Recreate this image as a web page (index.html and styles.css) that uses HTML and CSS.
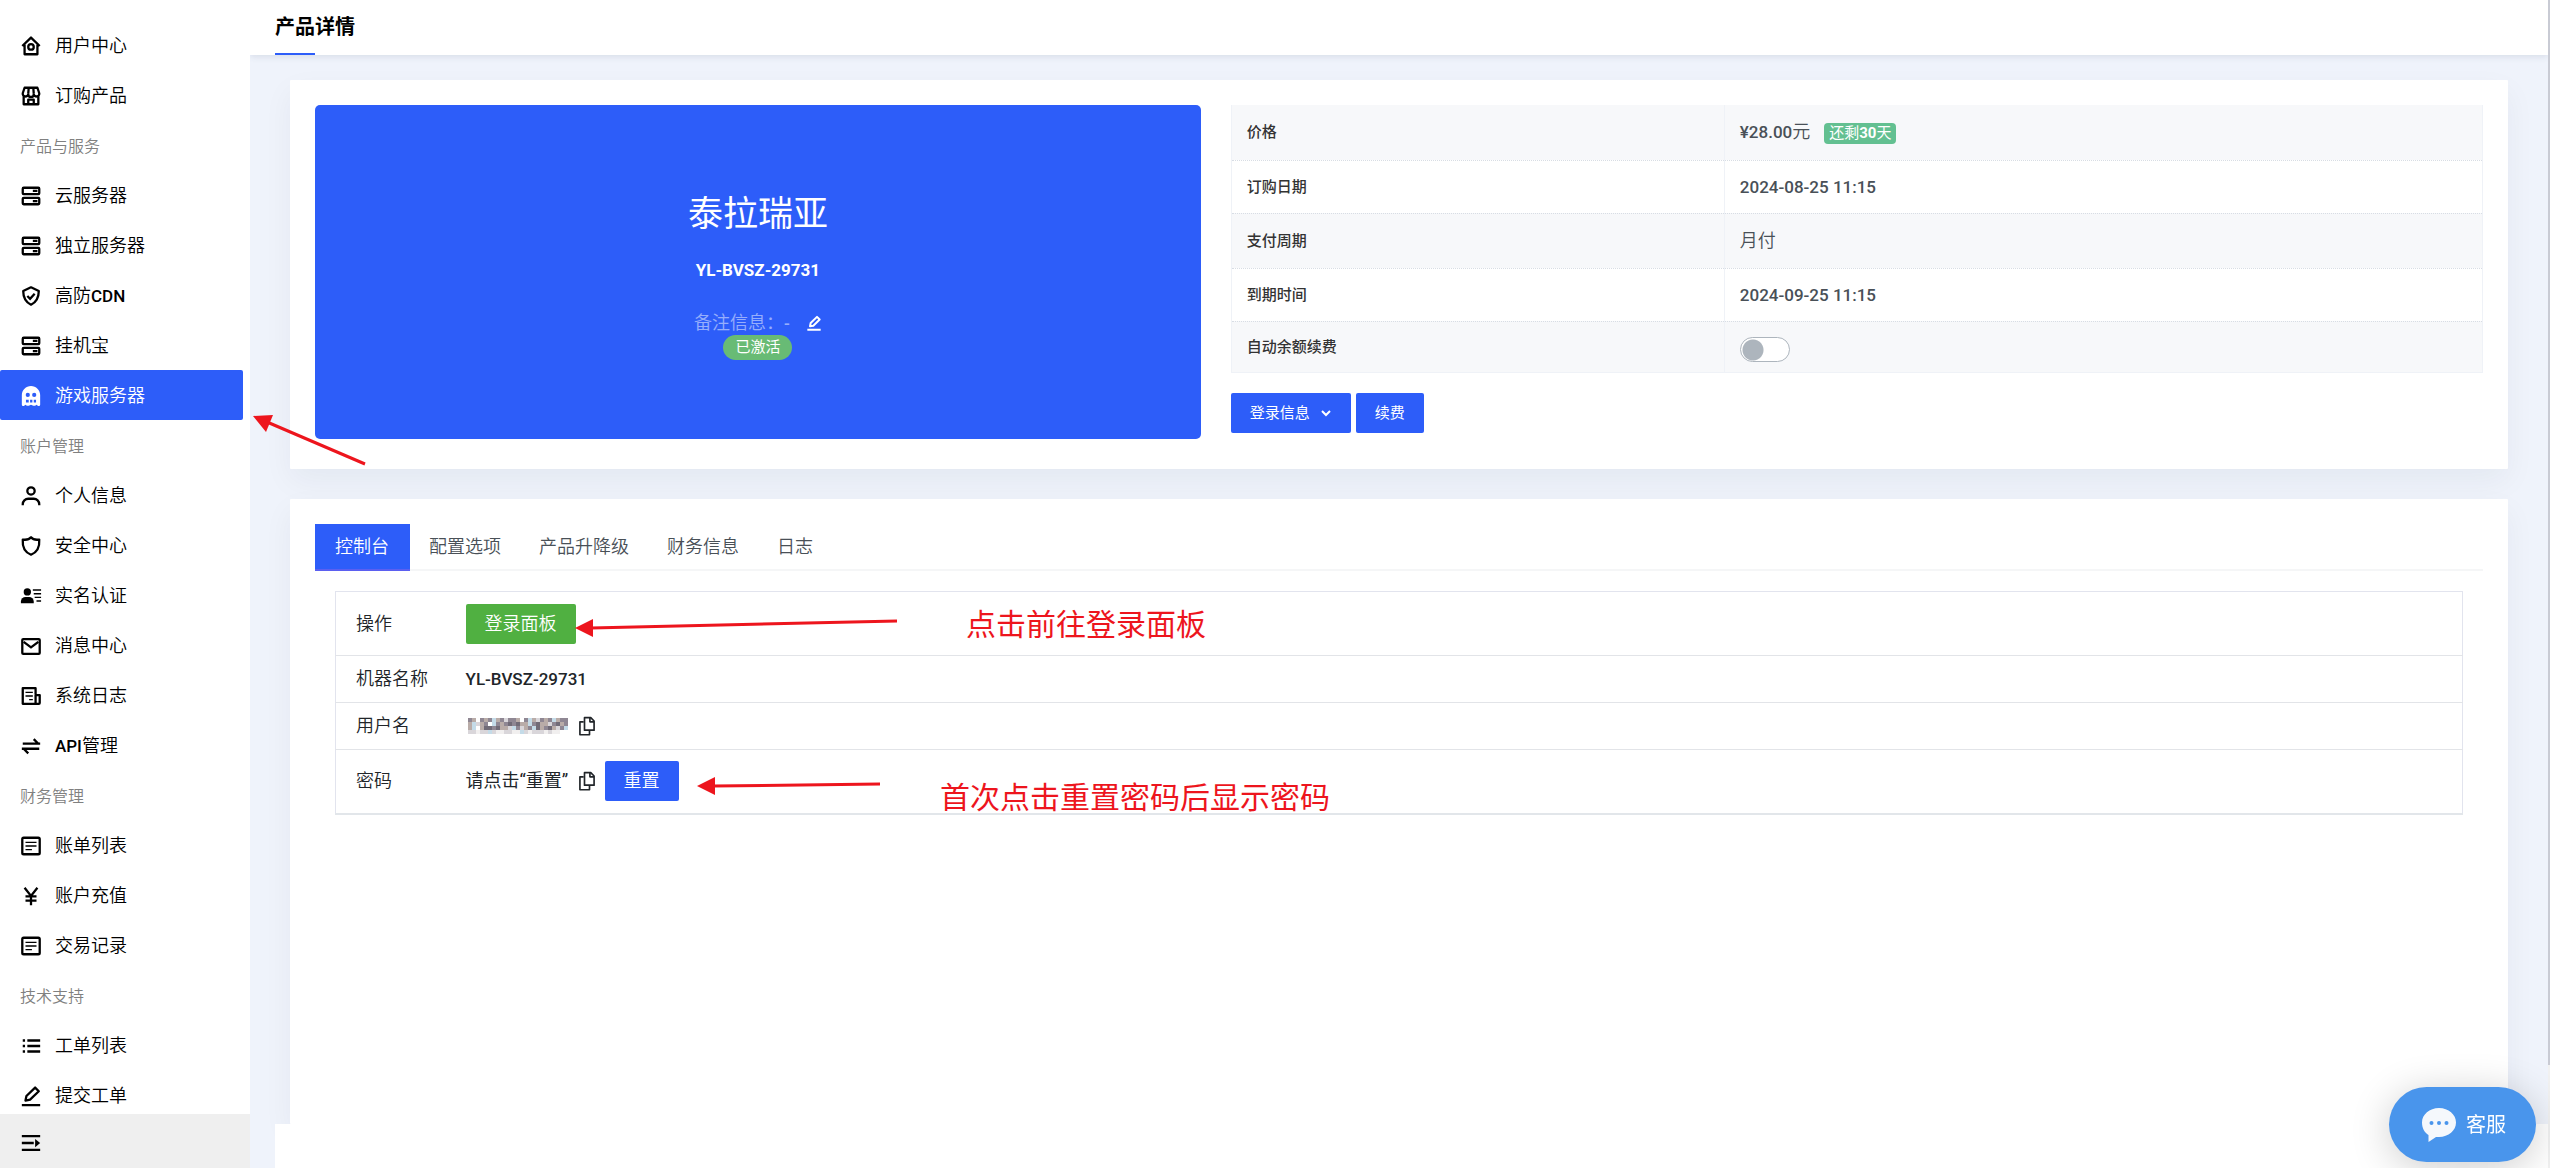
FILE: index.html
```html
<!DOCTYPE html>
<html lang="zh-CN">
<head>
<meta charset="utf-8">
<title>产品详情</title>
<link rel="stylesheet" href="styles.css">
</head>
<body>
<svg class="sprite" aria-hidden="true">
  <defs>
    <g id="i-home"><path d="M2.5 12 12 2.8 21.5 12M5 10.5V21h14V10.5" stroke-linejoin="round"/><circle cx="12" cy="13" r="3"/></g>
    <g id="i-store"><path d="M4 11v10h16V11M9 21v-5h6v5M5 3h14l2 6a3 3 0 0 1-6 1 3 3 0 0 1-6 0 3 3 0 0 1-6-1zM9.500 3 9 9.500M14.500 3l.5 6.500" stroke-linejoin="round"/></g>
    <g id="i-server"><rect x="3" y="3" width="18" height="7" rx="1"/><rect x="3" y="14" width="18" height="7" rx="1"/><path d="M14 6.500h5M14 17.500h5"/></g>
    <g id="i-shield-check"><path d="M12 2.500 3.500 6.500c0 7 2.500 12 8.500 15 6-3 8.500-8 8.500-15z" stroke-linejoin="round"/><path d="m8 12 3 3 5-5.500"/></g>
    <g id="i-ghost"><path fill="currentColor" stroke="none" fill-rule="evenodd" d="M12 1C6.500 1 2 5.500 2 11v10.500a1.500 1.500 0 0 0 2.600 1L6 21.500l1.500 1.200h2L12 21.500l2.500 1.200h2l1.500-1.200 1.400 1a1.500 1.500 0 0 0 2.600-1V11c0-5.500-4.500-10-10-10zM8.500 8.500a2.300 2.300 0 1 1 0 4.600 2.300 2.300 0 0 1 0-4.600zm7 0a2.300 2.300 0 1 1 0 4.600 2.300 2.300 0 0 1 0-4.600zM6.500 16h3v3h-3zm4.500 0h2.500v3H11zm4 0h2.500v3H15z"/></g>
    <g id="i-user"><circle cx="12" cy="6.500" r="4"/><path d="M3 22v-1a6 6 0 0 1 6-6h6a6 6 0 0 1 6 6v1"/></g>
    <g id="i-shield"><path d="M12 2.500C10 5 6.500 5.500 3 5c-.5 7 1.500 13.500 9 16.500C19.500 18.500 21.500 12 21 5c-3.500.5-7 0-9-2.500z" stroke-linejoin="round"/></g>
    <g id="i-idcard"><g fill="currentColor" stroke="none"><circle cx="8" cy="7.500" r="4"/><path d="M1 20v-2a5 5 0 0 1 5-5h4a5 5 0 0 1 5 5v2z"/></g><path stroke-width="1.500" d="M14 5.500h9M15 9.500h8M16 13.500h7M18 17.500h5"/></g>
    <g id="i-mail"><rect x="2.500" y="4.500" width="19" height="16" rx="1"/><path d="m4 7.500 8 6 8-6"/></g>
    <g id="i-log"><path d="M17 10V3.500H3v17h17.500a1 1 0 0 0 1-1V11H17v9.500" stroke-linejoin="round"/><path stroke-width="1.500" d="M6 8h8M6 12h8M10 16h4"/></g>
    <g id="i-swap"><path d="M3 9.500h19M15 4.500l5 5M21 15H2M9 20l-5-5"/></g>
    <g id="i-list"><rect x="2.500" y="3" width="19" height="18" rx="1.500"/><path stroke-width="1.500" d="M6 8h12M6 12h12M6 16h7"/></g>
    <g id="i-yen"><path d="m5 3 7 9 7-9M12 11v11M6 12.500h12M6 17h12"/></g>
    <g id="i-menu"><path d="M3 6h2.500M8 6h14M3 12h2.500M8 12h14M3 18h2.500M8 18h14"/></g>
    <g id="i-pen"><path d="m6 17 1-5L16.500 2.800l4 4L11 16zM2 22h20" stroke-linejoin="round"/></g>
    <g id="i-expand"><path d="M2 4.500h20M2 12h13M2 19.500h20"/><path d="m16.500 7.500 5.500 4.500-5.500 4.500z" fill="currentColor" stroke="none"/></g>
    <g id="i-copy"><path d="M9 2h7.500l4 4v11H9z" stroke-linejoin="round"/><path d="M15.500 2v5h5M8 7H3.500v15.500H15V18" stroke-linejoin="round"/></g>
  </defs>
</svg>

<div class="app">
  <aside class="sidebar">
    <nav class="menu">
      <a class="item" href="#"><svg class="icon" viewBox="0 0 24 24"><use href="#i-home"/></svg>用户中心</a>
      <a class="item" href="#"><svg class="icon" viewBox="0 0 24 24"><use href="#i-store"/></svg>订购产品</a>
      <div class="group">产品与服务</div>
      <a class="item" href="#"><svg class="icon" viewBox="0 0 24 24"><use href="#i-server"/></svg>云服务器</a>
      <a class="item" href="#"><svg class="icon" viewBox="0 0 24 24"><use href="#i-server"/></svg>独立服务器</a>
      <a class="item" href="#"><svg class="icon" viewBox="0 0 24 24"><use href="#i-shield-check"/></svg><span>高防<span class="latin">CDN</span></span></a>
      <a class="item" href="#"><svg class="icon" viewBox="0 0 24 24"><use href="#i-server"/></svg>挂机宝</a>
      <a class="item active" href="#"><svg class="icon" viewBox="0 0 24 24"><use href="#i-ghost"/></svg>游戏服务器</a>
      <div class="group">账户管理</div>
      <a class="item" href="#"><svg class="icon" viewBox="0 0 24 24"><use href="#i-user"/></svg>个人信息</a>
      <a class="item" href="#"><svg class="icon" viewBox="0 0 24 24"><use href="#i-shield"/></svg>安全中心</a>
      <a class="item" href="#"><svg class="icon" viewBox="0 0 24 24"><use href="#i-idcard"/></svg>实名认证</a>
      <a class="item" href="#"><svg class="icon" viewBox="0 0 24 24"><use href="#i-mail"/></svg>消息中心</a>
      <a class="item" href="#"><svg class="icon" viewBox="0 0 24 24"><use href="#i-log"/></svg>系统日志</a>
      <a class="item" href="#"><svg class="icon" viewBox="0 0 24 24"><use href="#i-swap"/></svg><span><span class="latin">API</span>管理</span></a>
      <div class="group">财务管理</div>
      <a class="item" href="#"><svg class="icon" viewBox="0 0 24 24"><use href="#i-list"/></svg>账单列表</a>
      <a class="item" href="#"><svg class="icon" viewBox="0 0 24 24"><use href="#i-yen"/></svg>账户充值</a>
      <a class="item" href="#"><svg class="icon" viewBox="0 0 24 24"><use href="#i-list"/></svg>交易记录</a>
      <div class="group">技术支持</div>
      <a class="item" href="#"><svg class="icon" viewBox="0 0 24 24"><use href="#i-menu"/></svg>工单列表</a>
      <a class="item" href="#"><svg class="icon" viewBox="0 0 24 24"><use href="#i-pen"/></svg>提交工单</a>
    </nav>
    <button class="collapse" type="button" aria-label="展开菜单"><svg class="icon" viewBox="0 0 24 24"><use href="#i-expand"/></svg></button>
  </aside>

  <div class="main">
    <header class="topbar"><h1>产品详情</h1></header>

    <main class="content">
      <section class="card summary">
        <div class="banner-col">
          <div class="banner">
            <h2>泰拉瑞亚</h2>
            <p class="code">YL-BVSZ-29731</p>
            <p class="remark"><span class="dim">备注信息：</span><span class="dim latin">-</span><button class="edit" type="button" aria-label="编辑备注"><svg class="icon" viewBox="0 0 24 24"><use href="#i-pen"/></svg></button></p>
            <span class="status">已激活</span>
          </div>
        </div>
        <div class="facts-col">
          <table class="facts">
            <tr><th scope="row">价格</th><td><span class="latin">¥28.00</span>元<span class="left-days">还剩<b>30</b>天</span></td></tr>
            <tr><th scope="row">订购日期</th><td class="latin">2024-08-25 11:15</td></tr>
            <tr><th scope="row">支付周期</th><td>月付</td></tr>
            <tr><th scope="row">到期时间</th><td class="latin">2024-09-25 11:15</td></tr>
            <tr><th scope="row"><label for="auto-renew">自动余额续费</label></th><td><input class="switch" id="auto-renew" type="checkbox"></td></tr>
          </table>
          <div class="actions">
            <button class="btn btn-small" type="button">登录信息<svg class="chevron" viewBox="0 0 12 12"><path d="m2 4 4 4 4-4"/></svg></button>
            <button class="btn btn-small" type="button">续费</button>
          </div>
        </div>
      </section>

      <section class="card detail">
        <nav class="tabs">
          <a class="tab active" href="#">控制台</a>
          <a class="tab" href="#">配置选项</a>
          <a class="tab" href="#">产品升降级</a>
          <a class="tab" href="#">财务信息</a>
          <a class="tab" href="#">日志</a>
        </nav>
        <div class="panel">
          <table class="info">
            <tr class="tall"><th scope="row">操作</th><td><button class="btn btn-green" type="button">登录面板</button></td></tr>
            <tr><th scope="row">机器名称</th><td class="latin">YL-BVSZ-29731</td></tr>
            <tr><th scope="row">用户名</th><td><div class="line"><span class="masked"><svg viewBox="0 0 100 16" role="img" aria-label="已打码">
              <path stroke="#8f8793" d="M0 2h4M12 2h4M20 2h4M32 2h4M40 2h8M56 2h4M72 2h4M80 2h4M92 2h8M16 6h4M28 6h4M36 6h4M44 6h4M64 6h4M84 6h4M96 6h4M24 10h4M48 10h4M60 10h4M76 10h4M92 10h4"/>
              <path stroke="#b9aca8" d="M4 2h4M16 2h4M28 2h4M48 2h4M64 2h4M76 2h4M88 2h4M0 6h4M12 6h4M32 6h4M52 6h8M72 6h8M92 6h4M0 10h4M12 10h4M32 10h8M56 10h4M72 10h4M84 10h4"/>
              <path stroke="#c4dbe8" d="M4 6h4M24 6h4M60 6h4M4 10h4M44 10h4M64 10h4M24 2h4M60 2h4M84 2h4M96 10h4M20 14h4M52 14h4"/>
              <path stroke="#716b77" d="M20 10h4M28 10h4M40 6h4M48 6h4M68 6h4M68 10h4M80 10h4M88 6h4M16 10h4"/>
              <path stroke="#d9d6da" d="M0 14h8M12 14h8M24 14h4M36 14h8M56 14h4M64 14h12M80 14h4M8 6h4M36 2h4M52 10h4M68 2h4M40 10h4M80 6h4M88 10h4"/>
              <path stroke="#f1efef" d="M8 14h4M28 14h8M44 14h8M60 14h4M76 14h4M84 14h8"/>
            </svg></span><svg class="icon copy" viewBox="0 0 24 24"><use href="#i-copy"/></svg></div></td></tr>
            <tr class="tall"><th scope="row">密码</th><td><div class="line"><span class="secret">请点击“重置”</span><svg class="icon copy" viewBox="0 0 24 24"><use href="#i-copy"/></svg><button class="btn" type="button">重置</button></div></td></tr>
          </table>
        </div>
      </section>
    </main>
    <footer class="footer"></footer>
  </div>
  <div class="scroll"><div class="thumb"></div></div>
</div>

<svg class="mark mark-menu" viewBox="0 0 116 54"><path d="M14 7 112 49"/><path class="head" d="M0 1l20-1-7 17z"/></svg>
<svg class="mark mark-login" viewBox="0 0 324 20"><path d="M16 10 322 3"/><path class="head" d="M0 10 18 1v18z"/></svg>
<svg class="mark mark-reset" viewBox="0 0 186 20"><path d="M16 10 183 8"/><path class="head" d="M0 10 18 1v18z"/></svg>
<p class="note note-login">点击前往登录面板</p>
<p class="note note-reset">首次点击重置密码后显示密码</p>

<button class="chat" type="button"><svg viewBox="0 0 34 34"><path d="M17 0c9.500 0 17 6.500 17 14.500S26.500 29 17 29h-3l-7.500 5v-7C2.500 24.500 0 20 0 14.500 0 6.500 7.500 0 17 0z"/><g class="dots"><circle cx="9.500" cy="15" r="2"/><circle cx="17" cy="15" r="2"/><circle cx="24.500" cy="15" r="2"/></g></svg>客服</button>
</body>
</html>
```
FILE: styles.css
```css
:root {
  --blue: #2d5df9;
  --page: #eff3fb;
  --red: #ed151d;
}

* { box-sizing: border-box; }

body {
  position: relative;
  margin: 0;
  background: var(--page);
  color: #212529;
  font: 350 18px/24px Roboto, "Noto Sans CJK SC", sans-serif;
}

h1, h2, p { margin: 0; }
a { color: inherit; text-decoration: none; }
button { border: 0; padding: 0; background: none; color: inherit; font: inherit; cursor: pointer; }
table { width: 100%; border-collapse: collapse; }
th { text-align: left; font-weight: inherit; }

.sprite { position: absolute; width: 0; height: 0; }

.icon {
  flex: none;
  width: 22px;
  height: 22px;
  fill: none;
  stroke: currentColor;
  stroke-width: 2;
}

.latin { font-size: 17px; font-weight: 500; }

.app {
  display: grid;
  grid-template-columns: 250px minmax(0, 1fr) 2px;
  min-height: 100vh;
}

/* sidebar */
.sidebar {
  position: sticky;
  top: 0;
  display: flex;
  flex-direction: column;
  height: 100vh;
  background: #fff;
  color: #000;
}

.sidebar .icon { stroke-width: 2.5; }

.menu {
  flex: 1;
  min-height: 0;
  padding: 20px 7px 0 0;
  overflow: hidden;
}

.item, .group {
  display: flex;
  align-items: center;
  gap: 13px;
  height: 50px;
  padding: 2px 0 0 20px;
}

.item.active { border-radius: 2px; background: var(--blue); color: #fff; }
.group { padding-top: 3px; color: #808080; font-size: 16px; }

.collapse {
  display: flex;
  align-items: center;
  height: 54px;
  padding: 4px 20px 0;
  background: #efefef;
}

/* page frame */
.main { display: flex; flex-direction: column; }

.topbar {
  height: 55px;
  padding-left: 25px;
  background: #fff;
  box-shadow: 0 2px 6px rgba(60, 70, 110, .12);
}

.topbar h1 {
  position: relative;
  height: 55px;
  color: #000;
  font-size: 20px;
  font-weight: 700;
  line-height: 54px;
}

.topbar h1::after {
  content: "";
  position: absolute;
  left: 0;
  bottom: 0;
  width: 40px;
  height: 2px;
  background: var(--blue);
}

.content {
  flex: 1;
  display: flex;
  flex-direction: column;
  gap: 30px;
  padding: 25px 40px 0;
}

.card { background: #fff; box-shadow: 0 12px 30px rgba(18, 38, 63, .05); border-radius: 1px; }
.footer { position: relative; height: 44px; margin-left: 25px; background: #fff; }

/* summary card */
.summary { display: flex; padding: 25px 10px 30px; }
.banner-col { width: calc(100% * 5 / 12); padding: 0 15px; }
.facts-col { flex: 1; padding: 0 15px; }

.banner {
  display: flex;
  flex-direction: column;
  align-items: center;
  min-height: 334px;
  padding-top: 84px;
  border-radius: 5px;
  background: var(--blue);
  color: #fff;
}

.banner h2 { font-size: 35px; font-weight: 400; line-height: 52px; }
.code { margin-top: 17px; font-size: 17px; font-weight: 700; }
.remark { display: flex; align-items: center; margin-top: 29px; }
.dim { opacity: .5; }
.edit { display: flex; margin-left: 16px; }
.edit .icon { width: 16px; height: 16px; stroke-width: 3; }

.status {
  height: 25px;
  padding: 0 12px;
  border-radius: 13px;
  background: #68bb75;
  font-size: 15px;
  font-weight: 400;
  line-height: 25px;
}

.facts { border: 1px solid #eff2f7; border-top: 0; }
.facts tr { height: 53px; border-bottom: 1px dotted #d8dde4; }
.facts tr:nth-child(odd) { background: #f7f8fa; }
.facts tr:nth-child(1), .facts tr:nth-child(3) { height: 55px; }
.facts tr:last-child { height: 51px; }
.facts th, .facts td { padding: 0 15px; }
.facts th { width: 493px; border-right: 1px solid #eff2f7; color: #333; font-size: 15px; font-weight: 500; }
.facts td { color: #495057; }

.left-days {
  display: inline-block;
  margin-left: 14px;
  padding: 0 5px;
  border-radius: 4px;
  background: #63c091;
  color: #fff;
  font-size: 15px;
  font-weight: 400;
  line-height: 21px;
}

.switch {
  appearance: none;
  display: block;
  width: 50px;
  height: 25px;
  margin: 6px 0 0;
  border: 1px solid #adb5bd;
  border-radius: 13px;
  background: radial-gradient(circle at 12px 12px, #adb5bd 10px, #fff 11px);
}

.actions { display: flex; align-items: center; gap: 5px; margin-top: 20px; }

.btn {
  display: inline-flex;
  align-items: center;
  justify-content: center;
  height: 40px;
  padding: 0 19px;
  border-radius: 2px;
  background: var(--blue);
  color: #fff;
}

.btn-small { font-size: 15px; font-weight: 400; }
.btn-green { background: #50b041; }
.chevron { width: 12px; height: 12px; margin-left: 10px; fill: none; stroke: #fff; stroke-width: 2; }

/* detail card */
.detail { flex: 1; padding: 25px; }
.tabs { display: flex; height: 47px; border-bottom: 2px solid #f5f6f7; color: #495057; }
.tab { height: 47px; padding: 0 19px; border-bottom: 2px solid transparent; line-height: 46px; }
.tab.active { padding: 0 21px 0 20px; border-bottom-color: #5b5ff0; background: var(--blue); color: #fff; }

.panel { padding: 20px 20px 0; }
.info { border: 1px solid #e2e4ee; border-bottom: 2px solid #e2e6ea; }
.info tr { height: 47px; border-bottom: 1px solid #e2e4e8; }
.info tr.tall { height: 64px; }
.info th, .info td { padding: 0 20px; }
.info th { width: 110px; padding-right: 0; white-space: nowrap; }

.line { display: flex; align-items: center; }
.masked { display: flex; width: 111px; padding-left: 2px; }
.masked svg { width: 100px; height: 16px; fill: none; stroke-width: 4; shape-rendering: crispEdges; }
.secret { width: 111px; white-space: nowrap; font-weight: 400; }
.copy { width: 20px; height: 20px; margin-right: 8px; }

.scroll { background: #f1f1f1; }
.thumb { position: sticky; top: 0; height: 91.2vh; background: #c9cbd4; }

/* annotations drawn over the page */
.mark { position: absolute; fill: none; stroke: var(--red); stroke-width: 3; }
.mark .head { fill: var(--red); stroke: none; }
.mark-menu { left: 253px; top: 415px; width: 116px; height: 54px; }
.mark-login { left: 575px; top: 618px; width: 324px; height: 20px; }
.mark-reset { left: 697px; top: 776px; width: 186px; height: 20px; }
.note { position: absolute; color: var(--red); font-size: 30px; font-weight: 400; line-height: 40px; }
.note-login { left: 966px; top: 605px; }
.note-reset { left: 940px; top: 778px; }

.chat {
  position: fixed;
  right: 14px;
  bottom: 6px;
  display: flex;
  align-items: center;
  justify-content: center;
  gap: 10px;
  width: 147px;
  height: 75px;
  padding-left: 3px;
  border-radius: 38px;
  background: #4995ec;
  box-shadow: 0 6px 40px rgba(0, 0, 0, .2);
  color: #fff;
  font-size: 20px;
  font-weight: 400;
}

.chat svg { width: 34px; height: 34px; fill: #f5f8fc; }
.chat .dots { fill: #4995ec; }
```
